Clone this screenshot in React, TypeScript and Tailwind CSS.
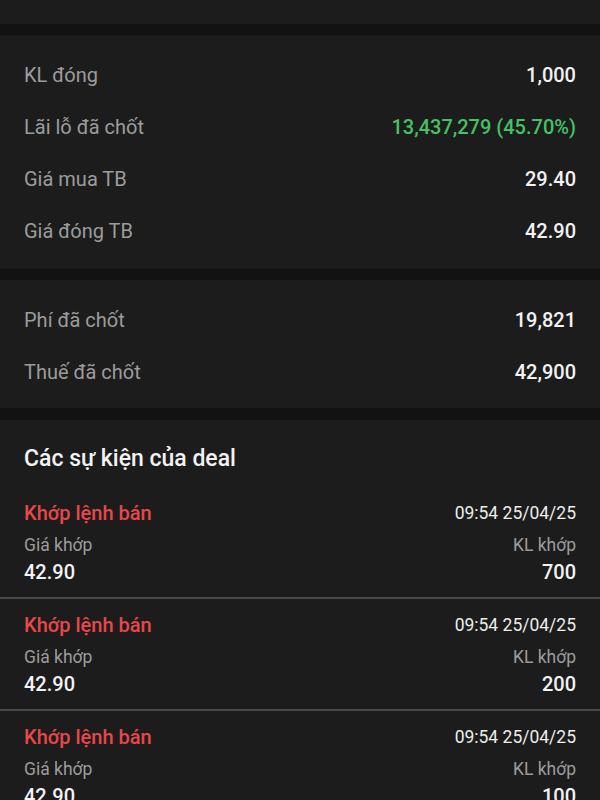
import React from 'react';

const summary = [
  { label: 'KL đóng', value: '1,000' },
  { label: 'Lãi lỗ đã chốt', value: '13,437,279 (45.70%)', green: true },
  { label: 'Giá mua TB', value: '29.40' },
  { label: 'Giá đóng TB', value: '42.90' },
];

const fees = [
  { label: 'Phí đã chốt', value: '19,821' },
  { label: 'Thuế đã chốt', value: '42,900' },
];

const events = [
  { time: '09:54 25/04/25', price: '42.90', qty: '700' },
  { time: '09:54 25/04/25', price: '42.90', qty: '200' },
  { time: '09:54 25/04/25', price: '42.90', qty: '100' },
];

const Row = ({ label, value, green }: { label: string; value: string; green?: boolean }) => (
  <div className="flex h-[52px] items-center justify-between">
    <span className="text-[20px] text-[#9c9c9c]">{label}</span>
    <span className={`text-[20px] font-medium ${green ? 'text-[#45c267]' : 'text-[#f2f2f2]'}`}>{value}</span>
  </div>
);

export default function App() {
  return (
    <div className="h-[800px] overflow-hidden bg-[#121212]" style={{ fontFamily: 'Roboto, "Noto Sans", sans-serif' }}>
      <div className="h-[24px] bg-[#1c1c1c]" />

      <section className="mt-[11px] bg-[#1c1c1c] px-6 pt-[14px] pb-[12px]">
        {summary.map((r) => (
          <Row key={r.label} {...r} />
        ))}
      </section>

      <section className="mt-[11px] bg-[#1c1c1c] px-6 pt-[14px] pb-[10px]">
        {fees.map((r) => (
          <Row key={r.label} {...r} />
        ))}
      </section>

      <section className="mt-[12px] bg-[#1c1c1c]">
        <h2 className="px-6 pt-[25px] pb-[14px] text-[23px] leading-[28px] font-medium text-[#f2f2f2]">
          Các sự kiện của deal
        </h2>
        {events.map((e, i) => (
          <div key={i} className="border-b-2 border-[#4a4a4a] px-6 pt-[14px] pb-[13px]">
            <div className="flex items-center justify-between leading-[24px]">
              <span className="text-[20px] font-medium text-[#e8474b]">Khớp lệnh bán</span>
              <span className="text-[17.5px] text-[#ececec]">{e.time}</span>
            </div>
            <div className="mt-[9px] flex items-center justify-between text-[17.5px] leading-[22px] text-[#9c9c9c]">
              <span>Giá khớp</span>
              <span>KL khớp</span>
            </div>
            <div className="mt-[4px] flex items-center justify-between text-[20px] leading-[24px] font-medium text-[#f2f2f2]">
              <span>{e.price}</span>
              <span>{e.qty}</span>
            </div>
          </div>
        ))}
      </section>
    </div>
  );
}
